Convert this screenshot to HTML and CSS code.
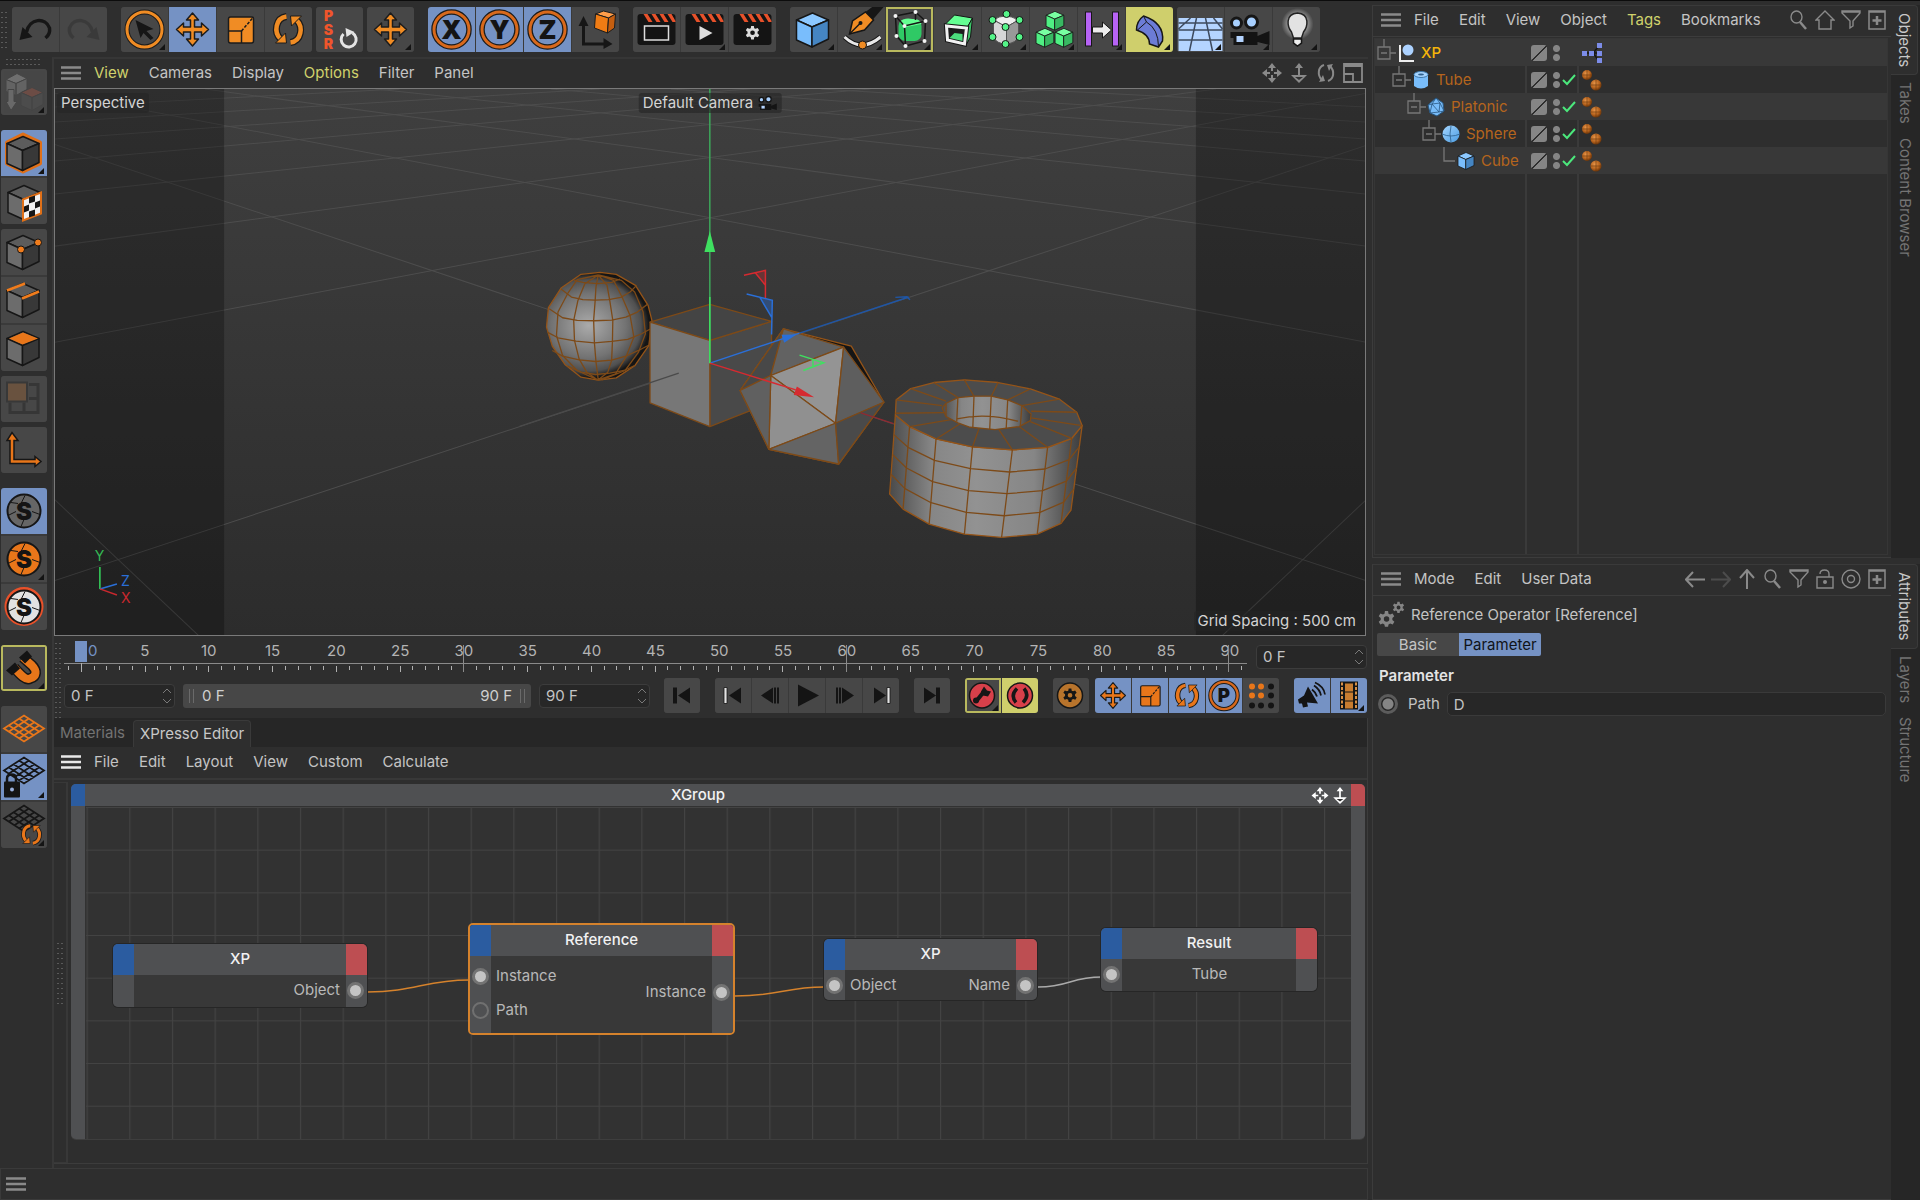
FILE: index.html
```html
<!DOCTYPE html>
<html lang="en">
<head>
    <meta charset="UTF-8">
    <meta name="viewport" content="width=device-width, initial-scale=1.0">
    <title>XPresso Editor</title>
    <link rel="stylesheet" href="styles.css">
</head>
<body>
    <!-- Icon sprite -->
    <svg class="sprite" aria-hidden="true">
        <defs>
            <radialGradient id="ball" cx=".4" cy=".35" r=".7"><stop offset="0" stop-color="#e8964a"/><stop offset=".6" stop-color="#b4611c"/><stop offset="1" stop-color="#5a2c08"/></radialGradient>
            <radialGradient id="glow"><stop offset=".5" stop-color="#bbb" stop-opacity=".8"/><stop offset="1" stop-color="#bbb" stop-opacity="0"/></radialGradient>
            <linearGradient id="blueTop" x1="0" y1="0" x2="1" y2="1"><stop offset="0" stop-color="#a5d6ff"/><stop offset="1" stop-color="#4a9be0"/></linearGradient>
        </defs>

        <symbol id="i-undo" viewBox="0 0 46 45"><path d="M14 25C17 11 33 10 37 21Q38 27 33 31" fill="none" stroke="currentColor" stroke-width="3.5"/><path d="M7 33L10 20L20 30Z" fill="currentColor"/></symbol>
        <symbol id="i-redo" viewBox="0 0 46 45"><path d="M32 25C29 11 13 10 9 21Q8 27 13 31" fill="none" stroke="currentColor" stroke-width="3.5"/><path d="M39 33L36 20L26 30Z" fill="currentColor"/></symbol>
        <symbol id="i-select" viewBox="0 0 46 45"><circle cx="23" cy="22.500" r="17.500" fill="none" stroke="#1c1c1c" stroke-width="5"/><circle cx="23" cy="22.500" r="17.500" fill="none" stroke="#f08c24" stroke-width="3"/><path d="M14 13L32 22L25 24L32 31L29 33L22 26L19 31Z" fill="#161616"/></symbol>
        <symbol id="i-move" viewBox="0 0 46 45"><path d="M23 6L29 13H25V20H32V16L39 22.500L32 29V25H25V32H29L23 39L17 32H21V25H14V29L7 22.500L14 16V20H21V13H17Z" fill="var(--ic, #f08c24)" stroke="#1c1c1c" stroke-width="1.500" stroke-linejoin="round"/></symbol>
        <symbol id="i-scale" viewBox="0 0 46 45"><rect x="11" y="10" width="25" height="26" rx="2" fill="var(--ic, #f08c24)" stroke="#1c1c1c" stroke-width="1.500"/><path d="M11 24H24V36M24 24V24" fill="none" stroke="#1c1c1c" stroke-width="1.500"/><path d="M24 24L36 10" stroke="#1c1c1c" stroke-width="1.500" stroke-dasharray="3 1.500"/></symbol>
        <symbol id="i-rotate" viewBox="0 0 46 45"><g fill="none"><path d="M21 9.500C10 11 8 25 15 32M25 35.500C36 34 38 20 31 13" stroke="#1c1c1c" stroke-width="7"/><path d="M21 9.500C10 11 8 25 15 32M25 35.500C36 34 38 20 31 13" stroke="var(--ic, #f08c24)" stroke-width="4.500"/></g><path d="M10 36L21 36L20 26ZM36 9L25 9L26 19Z" fill="var(--ic, #f08c24)" stroke="#1c1c1c"/></symbol>
        <symbol id="i-reset" viewBox="0 0 46 45"><path d="M27 27A7.500 7.500 0 1 0 36 26" fill="none" stroke="#e4e4e4" stroke-width="3"/><path d="M29 21L38 25L30 30Z" fill="#e4e4e4"/></symbol>
        <symbol id="i-ring" viewBox="0 0 46 45"><circle cx="23" cy="22.500" r="17.500" fill="none" stroke="#1c1c1c" stroke-width="5.500"/><circle cx="23" cy="22.500" r="17.500" fill="none" stroke="#d8691c" stroke-width="3"/></symbol>
        <symbol id="i-coords" viewBox="0 0 46 45"><path d="M11 17V37H33" fill="none" stroke="#161616" stroke-width="3"/><path d="M6 19L11 9L16 19ZM31 31L40 37L31 42Z" fill="#161616"/><g stroke="#1c1c1c" stroke-linejoin="round"><path d="M23 7L31 4L43 7L36 11Z" fill="#ff9e4a"/><path d="M23 7L36 11L35 26L22 21Z" fill="#f07c14"/><path d="M36 11L43 7L42 21L35 26Z" fill="#c45e10"/></g></symbol>
        <symbol id="i-clap" viewBox="0 0 46 45"><rect x="4" y="7" width="38" height="31" rx="3" fill="#141414"/><path d="M10 7H14L19 15H15ZM18 7H22L27 15H23ZM26 7H30L35 15H31ZM34 7H38L42 14V15H39Z" fill="#e8512a"/></symbol>
        <symbol id="i-gear" viewBox="0 0 20 20"><path fill-rule="evenodd" d="M8.500 1h3l.4 2.500 1.500.8 2.300-1 1.700 2.600-1.800 1.600v2l1.900 1.600-1.600 2.600-2.400-.9-1.600.9-.4 2.300h-3l-.5-2.300-1.500-.9-2.400.9-1.500-2.600 1.900-1.600v-2L2.600 5.900l1.600-2.600 2.400 1 1.500-.8zM10 6a2.600 2.600 0 1 0 .1 5.200A2.600 2.600 0 0 0 10 6z" fill="currentColor"/></symbol>
        <symbol id="i-cube" viewBox="0 0 46 45"><g stroke="var(--ln, #161616)" stroke-width="1.500" stroke-linejoin="round"><path d="M6 13L22 6L38 13L21.500 20Z" fill="var(--c1, #5c5c5c)"/><path d="M6 13L21.500 20V40L6 33Z" fill="var(--c2, #6c6c6c)"/><path d="M38 13L21.500 20V40L38 32Z" fill="var(--c3, #383838)"/></g></symbol>
        <symbol id="i-pen" viewBox="0 0 46 45"><path d="M27 5L35 -1H46L34 13Z" fill="#161616"/><path d="M11 27L14 14L27 5L35 13L26 23Z" fill="#f08c24" stroke="#161616" stroke-width="1.500"/><path d="M11 27L22 16" stroke="#161616" stroke-width="1.500"/><circle cx="22" cy="16" r="2" fill="#161616"/><path d="M6 30Q23 46 42 30" fill="none" stroke="#161616" stroke-width="5"/><path d="M6 30Q23 46 42 30" fill="none" stroke="#e8e8e8" stroke-width="3"/><circle cx="24" cy="38" r="4" fill="#f08c24" stroke="#161616"/></symbol>
        <symbol id="i-subdiv" viewBox="0 0 46 45"><rect x="12" y="12" width="23" height="22" rx="7" fill="#2fc965"/><path d="M13 15Q18 10 26 12Q34 12 35 17L20 20Z" fill="#65ff92"/><path d="M9 9L29 5L39 14L18 19ZM9 9L10 29L19 39L18 19M19 39L38 34L39 14M29 5L29 13" fill="none" stroke="#161616" stroke-width="1.500"/><g fill="#f4f4f4"><circle cx="9" cy="9" r="2"/><circle cx="29" cy="5" r="2"/><circle cx="39" cy="14" r="2"/><circle cx="18" cy="19" r="2"/><circle cx="10" cy="29" r="2"/><circle cx="19" cy="39" r="2"/><circle cx="38" cy="34" r="2"/></g></symbol>
        <symbol id="i-extrude" viewBox="0 0 46 45"><g stroke="#161616" stroke-linejoin="round"><path d="M10 18L20 8L38 11L33 20Z" fill="#64ff92"/><path d="M33 20L38 11L36 30L31 39Z" fill="#3bc468"/></g><path d="M12 19L32 21L30 37L13 33Z" fill="#1c1c1c" stroke="#161616" stroke-width="5"/><path d="M12 19L32 21L30 37L13 33Z" fill="#1c1c1c" stroke="#f2f2f2" stroke-width="3"/><path d="M15 31L20 26L28 27L28 34Z" fill="#4bdd7c"/></symbol>
        <symbol id="i-cage" viewBox="0 0 46 45"><g stroke="#555" stroke-linejoin="round"><path d="M11 13Q22 5 36 13L24 20Z" fill="#eee"/><path d="M11 13L24 20V37Q14 37 11 30Z" fill="#d6d6d6"/><path d="M36 13L24 20V37Q34 36 36 29Z" fill="#999"/></g><g fill="#54f588" stroke="#161616"><circle cx="24" cy="7" r="3.500"/><circle cx="10" cy="13" r="3.500"/><circle cx="37" cy="13" r="3.500"/><circle cx="23" cy="20" r="3.500"/><circle cx="10" cy="30" r="3.500"/><circle cx="37" cy="30" r="3.500"/><circle cx="23" cy="37" r="3.500"/></g></symbol>
        <symbol id="i-array" viewBox="0 0 46 45"><g class="green"><use href="#i-cube" x="12" y="1" width="26" height="25"/><use href="#i-cube" x="2" y="18" width="26" height="25"/><use href="#i-cube" x="21" y="18" width="26" height="25"/></g></symbol>
        <symbol id="i-instance" viewBox="0 0 46 45"><g fill="#b763f5" stroke="#161616"><rect x="7" y="5" width="6" height="34"/><rect x="34" y="5" width="6" height="34"/></g><path d="M14 20H24V15L33 23L24 31V26H14Z" fill="#ececec" stroke="#161616"/></symbol>
        <symbol id="i-bend" viewBox="0 0 46 45"><path d="M17 9Q38 16 36 34L32 40L23 37Q23 27 10 23Q10 14 17 9Z" fill="#6c7cd6" stroke="#161616" stroke-width="1.500"/><path d="M17 9L20 15Q32 22 32 40M20 15L11 23" fill="none" stroke="#161616"/></symbol>
        <symbol id="i-floor" viewBox="0 0 46 45"><rect x="1" y="11" width="44" height="33" fill="#b4d4ff"/><path d="M1 16H45M1 23H45M1 33H45M13 11L1 22M19 11L12 44M28 11L35 44M36 11L45 22" fill="none" stroke="#3d4a5e" stroke-width="1.500"/></symbol>
        <symbol id="i-camera" viewBox="0 0 46 45"><circle cx="11" cy="16" r="5" fill="#a8d0ff" stroke="#161616" stroke-width="3"/><circle cx="26" cy="15" r="6" fill="#a8d0ff" stroke="#161616" stroke-width="3"/><path d="M5 25H32V29L44 24V38L32 35V38H8V31H5Z" fill="#141414"/><rect x="11" y="29" width="7" height="6" fill="#b4d4ff"/></symbol>
        <symbol id="i-light" viewBox="0 0 46 45"><circle cx="24" cy="17" r="16" fill="url(#glow)"/><path d="M24 6C11 7 14 20 18 25L20 31H28L30 25C34 20 37 7 24 6Z" fill="#e2e2e2" stroke="#222" stroke-width="1.500"/><path d="M20 32H28V36L24 39L20 36Z" fill="#eee" stroke="#161616" stroke-width="1.500"/></symbol>

        <symbol id="i-convert" viewBox="0 0 46 45"><g stroke="#444"><path d="M5 10L16 4L26 9L15 14Z" fill="#8a8a8a"/><path d="M5 10L15 14V26L5 22ZM26 9L15 14V26L26 20Z" fill="#777"/><path d="M20 23L31 18L42 23L31 28Z" fill="#855045"/><path d="M20 23L31 28V41L20 36ZM42 23L31 28V41L42 35Z" fill="#505050"/><path d="M7 20H13V32H16L10 41L5 32H7Z" fill="#808080"/></g></symbol>
        <symbol id="i-model" viewBox="0 0 46 45"><path d="M6 12L22 4L39 12V33L22 41L6 33Z" fill="none" stroke="#e07018" stroke-width="4" stroke-linejoin="round"/><use href="#i-cube" width="46" height="45"/></symbol>
        <symbol id="i-texture" viewBox="0 0 46 45"><use href="#i-cube" x="1" y="1" width="46" height="45"/><path d="M22 21L40 14V35L22 42Z" fill="#f2f2f2" stroke="#e07018" stroke-width="2"/><path d="M28 19L34 17V23L28 25ZM23 28L28 26V32L23 34ZM34 24L39 22V28L34 30ZM28 33L34 31V37L28 39Z" fill="#161616"/></symbol>
        <symbol id="i-points" viewBox="0 0 46 45"><use href="#i-cube" width="46" height="45"/><g fill="#f07c1c" stroke="#161616"><circle cx="20" cy="20" r="3.500"/><circle cx="37" cy="13" r="3.500"/></g></symbol>
        <symbol id="i-edges" viewBox="0 0 46 45"><use href="#i-cube" width="46" height="45"/><path d="M6 13L24 6M21 21L38 14" stroke="#f07c1c" stroke-width="2.500"/></symbol>
        <symbol id="i-polys" viewBox="0 0 46 45"><use href="#i-cube" width="46" height="45"/><path d="M8 13L22 7L37 13L21.500 19Z" fill="#e8761a"/></symbol>
        <symbol id="i-uv" viewBox="0 0 46 45"><path d="M28 8H37V36H9V26M23 26V36M28 22H37" fill="none" stroke="#363636" stroke-width="3"/><rect x="6" y="6" width="20" height="19" fill="#69523f" stroke="#383838" stroke-width="2"/></symbol>
        <symbol id="i-axis" viewBox="0 0 46 45"><path d="M9 13H6L11 5L17 13H13V32H34V29L40 34L34 39V36H9Z" fill="#e8761a" stroke="#161616" stroke-width="1.500"/></symbol>
        <symbol id="i-snap" viewBox="0 0 46 45"><circle cx="23" cy="22.500" r="16.500" fill="var(--ic, #666)" stroke="#161616" stroke-width="2"/><path d="M7 27L15 23M20 38L23 31M39 26L31 23M24 7L20 15M10 14L17 15" stroke="#161616"/></symbol>
        <symbol id="i-magnet" viewBox="0 0 46 45"><path d="M13 22C20 30 25 35 29 33C36 31 36 25 31 20L22 12" fill="none" stroke="#161616" stroke-width="11"/><path d="M13 22C20 30 25 35 29 33C36 31 36 25 31 20L22 12" fill="none" stroke="#e8761a" stroke-width="8"/><path d="M5 25L14 17L19 23L11 30ZM18 12L26 5L31 11L24 18Z" fill="#141414"/></symbol>
        <symbol id="i-grid" viewBox="0 0 46 45"><path d="M3 22L23 9L43 22L23 35ZM8 19L28 32M13 16L33 29M18 12L38 25M38 19L18 32M33 16L13 29M28 12L8 25" fill="none" stroke="var(--ic, #161616)" stroke-width="1.800"/></symbol>

        <symbol id="i-burger" viewBox="0 0 20 14"><path d="M0 1.500H20M0 7H20M0 12.500H20" stroke="currentColor" stroke-width="2.500"/></symbol>
        <symbol id="i-pan" viewBox="0 0 20 20"><path d="M10 0L14 5H11V8H9V5H6ZM10 20L14 15H11V12H9V15H6ZM0 10L5 6V9H8V11H5V14ZM20 10L15 6V9H12V11H15V14Z" fill="currentColor"/></symbol>
        <symbol id="i-dolly" viewBox="0 0 20 20"><path d="M10 0L14 5H11V12H18L10 20L2 12H9V5H6Z" fill="currentColor"/><path d="M10 17L6 14H14Z" fill="#303030"/></symbol>
        <symbol id="i-orbit" viewBox="0 0 20 20"><path d="M8 2C2 4 1 12 6 17M12 18C18 16 19 8 14 3" fill="none" stroke="currentColor" stroke-width="2"/><path d="M3 19L9 18L7 12ZM17 1L11 2L13 8Z" fill="currentColor"/></symbol>
        <symbol id="i-panel" viewBox="0 0 20 20"><path d="M1 1H19V19H1ZM1 3H19M1 11H10V19" fill="none" stroke="currentColor" stroke-width="1.800"/></symbol>
        <symbol id="i-search" viewBox="0 0 20 20"><ellipse cx="7.500" cy="7" rx="5.500" ry="6" fill="none" stroke="currentColor" stroke-width="1.400"/><path d="M11 12L17 19" stroke="currentColor" stroke-width="2.500"/></symbol>
        <symbol id="i-home" viewBox="0 0 20 20"><path d="M10 1L19 10H16V19H4V10H1Z" fill="none" stroke="currentColor" stroke-width="1.400"/></symbol>
        <symbol id="i-filter" viewBox="0 0 20 20"><path d="M1 1H19V3L12 11V16L9 18V11L1 3ZM1 2H19" fill="none" stroke="currentColor" stroke-width="1.400"/></symbol>
        <symbol id="i-add" viewBox="0 0 20 20"><path d="M2 1H18V19H2ZM2 2H18" fill="none" stroke="currentColor" stroke-width="1.500"/><path d="M10 6V15M5.500 10.500H14.500" stroke="currentColor" stroke-width="2.500"/></symbol>
        <symbol id="i-back" viewBox="0 0 20 20"><path d="M20 10.500H1M8 3L1 10.500L8 18" fill="none" stroke="currentColor" stroke-width="2"/></symbol>
        <symbol id="i-fwd" viewBox="0 0 20 20"><path d="M0 10.500H19M12 3L19 10.500L12 18" fill="none" stroke="currentColor" stroke-width="2"/></symbol>
        <symbol id="i-up" viewBox="0 0 20 20"><path d="M10 20V1M3 9L10 1L17 9" fill="none" stroke="currentColor" stroke-width="2"/></symbol>
        <symbol id="i-lock" viewBox="0 0 20 20"><path d="M2 8H18V19H2ZM5 5Q5 1 9.500 1T14 5V8" fill="none" stroke="currentColor" stroke-width="1.400"/><circle cx="10" cy="13" r="2" fill="currentColor"/></symbol>
        <symbol id="i-target" viewBox="0 0 20 20"><g fill="none" stroke="currentColor" stroke-width="1.400"><circle cx="10" cy="10" r="9"/><circle cx="10" cy="10" r="3.500"/></g></symbol>

        <symbol id="i-minus" viewBox="0 0 19 27"><path d="M7 0V8M1 8H13V20H1ZM4 14H10M13 14H19" fill="none" stroke="#777" stroke-width="1.300"/></symbol>
        <symbol id="i-elbow" viewBox="0 0 19 27"><path d="M7 0V14H18" fill="none" stroke="#777" stroke-width="1.300"/></symbol>
        <symbol id="o-null" viewBox="0 0 18 20"><path d="M3 2V18H17" fill="none" stroke="#eee" stroke-width="2"/><circle cx="11" cy="7" r="5.500" fill="#acd2ff"/></symbol>
        <symbol id="o-tube" viewBox="0 0 18 20"><path d="M2 4V16Q9 21 16 16V4Z" fill="#79bdfa"/><ellipse cx="9" cy="4.500" rx="7" ry="3" fill="#a5d4ff" stroke="#3f79ab"/><ellipse cx="9" cy="4.500" rx="3" ry="1" fill="#30618e"/></symbol>
        <symbol id="o-platonic" viewBox="0 0 18 20"><path d="M9 1L16 6L17 14L10 19L3 16L1 8Z" fill="#79bdfa" stroke="#28567f"/><path d="M5 7L13 6L12 15L5 7L3 16L12 15L17 14L13 6L9 1L5 7L1 8" fill="none" stroke="#28567f" stroke-width=".8"/></symbol>
        <symbol id="o-sphere" viewBox="0 0 18 20"><circle cx="9" cy="10" r="8.500" fill="url(#blueTop)"/><path d="M0 10Q9 14 18 10M9 2Q7 10 9 18" fill="none" stroke="#2b5e8c" stroke-width=".8"/></symbol>
        <symbol id="t-balls" viewBox="0 0 22 24"><circle cx="6" cy="7" r="5" fill="url(#ball)"/><circle cx="15" cy="17" r="5.500" fill="url(#ball)"/><path d="M6 2V12M1 7H11M15 12V22M10 17H20" stroke="#6a350c" stroke-width=".6"/></symbol>
        <symbol id="t-xpresso" viewBox="0 0 22 24"><path d="M3 12H18M12 12L18 5M12 12L18 20" stroke="#161616" stroke-width="1.500"/><g fill="#7c8ce8"><rect x="1" y="10" width="5" height="5"/><rect x="8" y="10" width="5" height="5"/><rect x="16" y="10" width="5" height="5"/><rect x="16" y="2" width="5" height="5"/><rect x="16" y="17" width="5" height="5"/></g></symbol>
    </svg>

    <div class="app">
        <div class="workspace">
            <header class="toolbar">
                <span class="grip"></span>
                <div class="group">
                    <button class="tool" aria-label="Undo"><svg><use href="#i-undo"/></svg></button>
                    <button class="tool faint" aria-label="Redo"><svg><use href="#i-redo"/></svg></button>
                </div>
                <div class="group gap-wide">
                    <button class="tool more" aria-label="Live selection"><svg><use href="#i-select"/></svg></button>
                    <button class="tool on" aria-label="Move"><svg><use href="#i-move"/></svg></button>
                    <button class="tool" aria-label="Scale"><svg><use href="#i-scale"/></svg></button>
                    <button class="tool" aria-label="Rotate"><svg><use href="#i-rotate"/></svg></button>
                </div>
                <div class="group"><button class="tool" aria-label="Reset PSR"><svg viewBox="0 0 46 45"><g class="glyph red"><text x="12" y="14">P</text><text x="12" y="28">S</text><text x="12" y="42">R</text></g><use href="#i-reset"/></svg></button></div>
                <div class="group"><button class="tool more" aria-label="Last tool"><svg><use href="#i-move"/></svg></button></div>
                <div class="group gap-wide">
                    <button class="tool on" aria-label="X axis"><svg viewBox="0 0 46 45"><use href="#i-ring"/><text class="glyph" x="23" y="32" font-size="26">X</text></svg></button>
                    <button class="tool on" aria-label="Y axis"><svg viewBox="0 0 46 45"><use href="#i-ring"/><text class="glyph" x="23" y="32" font-size="26">Y</text></svg></button>
                    <button class="tool on" aria-label="Z axis"><svg viewBox="0 0 46 45"><use href="#i-ring"/><text class="glyph" x="23" y="32" font-size="26">Z</text></svg></button>
                    <button class="tool" aria-label="Coordinate system"><svg><use href="#i-coords"/></svg></button>
                </div>
                <div class="group gap-wide">
                    <button class="tool" aria-label="Render view"><svg viewBox="0 0 46 45"><use href="#i-clap"/><rect x="11" y="19" width="24" height="14" fill="none" stroke="#ddd" stroke-width="1.500"/></svg></button>
                    <button class="tool more" aria-label="Render to picture viewer"><svg viewBox="0 0 46 45"><use href="#i-clap"/><path d="M18 19L31 26L18 33Z" fill="#ddd"/></svg></button>
                    <button class="tool" aria-label="Render settings"><svg viewBox="0 0 46 45"><use href="#i-clap"/><use class="light" href="#i-gear" x="14" y="18" width="18" height="18"/></svg></button>
                </div>
                <div class="group gap-wide">
                    <button class="tool more blue" aria-label="Cube"><svg><use href="#i-cube"/></svg></button>
                    <button class="tool more" aria-label="Spline pen"><svg><use href="#i-pen"/></svg></button>
                    <button class="tool more outlined" aria-label="Subdivision surface"><svg><use href="#i-subdiv"/></svg></button>
                    <button class="tool more" aria-label="Extrude"><svg><use href="#i-extrude"/></svg></button>
                    <button class="tool more" aria-label="Deformation cage"><svg><use href="#i-cage"/></svg></button>
                    <button class="tool more" aria-label="Array"><svg><use href="#i-array"/></svg></button>
                    <button class="tool more" aria-label="Instance"><svg><use href="#i-instance"/></svg></button>
                    <button class="tool more yellow" aria-label="Bend"><svg><use href="#i-bend"/></svg></button>
                </div>
                <div class="group">
                    <button class="tool more" aria-label="Floor"><svg><use href="#i-floor"/></svg></button>
                    <button class="tool more" aria-label="Camera"><svg><use href="#i-camera"/></svg></button>
                    <button class="tool more" aria-label="Light"><svg><use href="#i-light"/></svg></button>
                </div>
            </header>

            <div class="body">
                <aside class="side">
                    <span class="grip flat"></span>
                    <div class="group"><button class="tool more faint" aria-label="Make editable"><svg><use href="#i-convert"/></svg></button></div>
                    <div class="group apart">
                        <button class="tool more on" aria-label="Model mode"><svg><use href="#i-model"/></svg></button>
                        <button class="tool" aria-label="Texture mode"><svg><use href="#i-texture"/></svg></button>
                    </div>
                    <div class="group">
                        <button class="tool" aria-label="Points"><svg><use href="#i-points"/></svg></button>
                        <button class="tool" aria-label="Edges"><svg><use href="#i-edges"/></svg></button>
                        <button class="tool" aria-label="Polygons"><svg><use href="#i-polys"/></svg></button>
                    </div>
                    <div class="group"><button class="tool" aria-label="UV mode"><svg><use href="#i-uv"/></svg></button></div>
                    <div class="group"><button class="tool" aria-label="Enable axis"><svg><use href="#i-axis"/></svg></button></div>
                    <div class="group apart">
                        <button class="tool on" aria-label="Viewport solo off"><svg viewBox="0 0 46 45"><use href="#i-snap"/><text class="glyph" x="23" y="31" font-size="24">S</text></svg></button>
                        <button class="tool more orange" aria-label="Viewport solo single"><svg viewBox="0 0 46 45"><use href="#i-snap"/><text class="glyph" x="23" y="31" font-size="24">S</text></svg></button>
                        <button class="tool white" aria-label="Viewport solo selection"><svg viewBox="0 0 46 45"><circle cx="23" cy="22" r="18" fill="none" stroke="#e8512a" stroke-width="3"/><use href="#i-snap"/><text class="glyph" x="23" y="31" font-size="24">S</text></svg></button>
                    </div>
                    <div class="group apart"><button class="tool more outlined" aria-label="Enable snap"><svg><use href="#i-magnet"/></svg></button></div>
                    <div class="group apart">
                        <button class="tool orange" aria-label="Workplane"><svg><use href="#i-grid"/></svg></button>
                        <button class="tool more on" aria-label="Locked workplane"><svg viewBox="0 0 46 45"><use href="#i-grid" y="-6" width="46" height="45"/><path d="M6 28V24Q6 20 10.500 20T15 24V28" fill="none" stroke="#141414" stroke-width="2.500"/><rect x="3" y="27" width="16" height="16" rx="1" fill="#141414"/><circle cx="11" cy="35" r="2" fill="#9ab0dc"/></svg></button>
                        <button class="tool more" aria-label="Planar workplane"><svg viewBox="0 0 46 45"><use href="#i-grid" y="-6" width="46" height="45"/><g class="orange"><use href="#i-rotate" x="15" y="17" width="31" height="30"/></g></svg></button>
                    </div>
                </aside>

                <main class="main">
                    <nav class="menubar">
                        <svg class="burger"><use href="#i-burger"/></svg>
                        <button class="hot">View</button>
                        <button>Cameras</button>
                        <button>Display</button>
                        <button class="hot">Options</button>
                        <button>Filter</button>
                        <button>Panel</button>
                        <div class="tools">
                            <svg><use href="#i-pan"/></svg>
                            <svg><use href="#i-dolly"/></svg>
                            <svg><use href="#i-orbit"/></svg>
                            <svg><use href="#i-panel"/></svg>
                        </div>
                    </nav>

                    <section class="viewport">
                        <svg class="scene" viewBox="54 89 1312 545" preserveAspectRatio="xMidYMid slice">
                            <defs>
                                <linearGradient id="bg" x1="0" y1="0" x2="0" y2="1"><stop offset="0" stop-color="#3f3f3f"/><stop offset="1" stop-color="#2c2c2c"/></linearGradient>
                                <radialGradient id="sph" gradientUnits="userSpaceOnUse" cx="180" cy="315" r="175"><stop offset="0" stop-color="#ababab"/><stop offset=".55" stop-color="#737373"/><stop offset=".78" stop-color="#505050"/><stop offset=".9" stop-color="#151515"/></radialGradient>
                                <linearGradient id="wall" x1="0" y1="0" x2="1" y2="0"><stop offset="0" stop-color="#4a4a4a"/><stop offset=".22" stop-color="#868686"/><stop offset=".45" stop-color="#929292"/><stop offset=".75" stop-color="#868686"/><stop offset="1" stop-color="#3c3c3c"/></linearGradient>
                            </defs>
                            <rect x="54" y="89" width="1312" height="545" fill="url(#bg)"/>
                            <!-- floor grid, right half mirrors the left -->
                            <g stroke="#4d4d4d" stroke-width="1" fill="none">
                                <path id="floor" d="M55 580L710 363M55 342L1366 93M55 246L1215 89M55 194L1045 89M55 161L870 89M55 139L750 89M55 122L600 89M55 107L400 89M55 498L200 635"/>
                                <use href="#floor" transform="translate(1421 0) scale(-1 1)"/>
                                <path d="M55 144L710 363M710 363L1366 145"/>
                            </g>
                            <path d="M54 89H225V634H54ZM1195 89H1366V634H1195Z" fill="#000" fill-opacity=".27"/>

                            <g transform="translate(520 220) scale(.3827 .3333)" stroke-linejoin="round" stroke="#7d4a18" class="wire">
                                <path d="M160 162L210 156L252 162L302 195L335 255L345 300L337 375L300 436L252 472L205 479L160 470L118 432L85 377L70 320L75 262L108 203Z" fill="url(#sph)" stroke="#955418"/>
                                <g fill="none">
                                    <path d="M142 180L165 186L203 190L240 186L262 176M108 206L135 230L165 238L197 239L232 238L264 231L288 215L305 195M77 265L112 292L150 300L195 301L240 299L277 290L307 275L333 252M72 335L100 352L147 362L195 367L240 363L282 357L318 340L342 325M85 390L112 407L155 418L198 423L240 419L275 408L310 390L335 375M125 437L160 455L198 462L235 458L272 450L300 435"/>
                                    <path d="M205 164L150 178L125 220L100 275L96 345L112 405L150 450L203 478M205 164L170 190L152 240L141 300L143 360L155 415L175 455L203 478M205 164L199 200L197 240L193 300L195 367L199 423L205 478M205 164L228 195L235 240L243 300L242 363L240 419L230 455L205 478M205 164L245 180L268 232L288 285L298 350L277 410L250 460L205 478M205 164L265 180L300 215L322 275L328 340L310 395L275 450L215 478"/>
                                </g>

                                <path d="M496 360L657 303V545L496 618Z" fill="#494949"/>
                                <path d="M340 305L496 252L657 303L496 360Z" fill="#444"/>
                                <path d="M340 305L496 360V618L340 547Z" fill="#777"/>
                                <path d="M0 617L415 458" stroke="#4a4a4a" fill="none"/>

                                <path d="M688 325L865 377L950 545L832 730L650 686L575 510Z" fill="#151515" stroke="#955418"/>
                                <path d="M688 325L655 465L575 510Z" fill="#484848"/>
                                <path d="M688 325L845 380L655 465Z" fill="#626262"/>
                                <path d="M655 465L845 380L824 608Z" fill="#949494"/>
                                <path d="M655 465L824 608L650 686Z" fill="#909090"/>
                                <path d="M575 510L655 465L650 686Z" fill="#606060"/>
                                <path d="M845 380L950 545L824 608Z" fill="#5e5e5e"/>
                                <path d="M650 686L824 608L832 730Z" fill="#646464"/>
                                <path d="M824 608L950 545L832 730Z" fill="#4a4a4a"/>

                                <path d="M980 583L1017 618L1086 655L1181 679L1285 688L1377 680L1440 653L1467 615L1438 868L1412 908L1350 940L1257 950L1160 940L1068 910L1000 865L965 820Z" fill="url(#wall)" stroke="#955418"/>
                                <path d="M982 538L1020 504L1080 486L1160 478L1248 486L1332 505L1408 536L1453 575L1467 615L1440 653L1377 680L1285 688L1181 679L1086 655L1017 618L980 583Z" fill="#4c4c4c" stroke="#955418"/>
                                <path d="M1102 562L1112 548L1143 531L1185 527L1230 527L1273 538L1310 555L1334 580L1332 600L1303 618L1240 627L1175 620L1143 607L1112 588Z" fill="url(#wall)"/>
                                <g fill="none">
                                    <path d="M976 642L1013 680L1082 719L1176 744L1278 754L1370 745L1433 717L1460 678M973 702L1009 742L1077 783L1171 810L1271 819L1364 810L1426 781L1453 742M969 761L1004 803L1073 846L1165 875L1264 885L1357 875L1419 844L1445 805"/>
                                    <path d="M1017 618L1000 865M1086 655L1068 910M1181 679L1160 940M1285 688L1257 950M1377 680L1350 940M1440 653L1412 908"/>
                                    <path d="M982 538L1102 555M1020 504L1112 542M1080 486L1143 531M1160 478L1185 527M1248 486L1230 527M1332 505L1273 538M1408 536L1310 555M1453 575L1334 572M1467 615L1334 592M1440 653L1332 603M1377 680L1303 618M1285 688L1250 627M1181 679L1198 624M1086 655L1148 610M1017 618L1125 597M980 578L1108 576"/>
                                    <path d="M1112 548V588M1143 531L1140 603M1185 527L1182 620M1230 527L1226 627M1273 538L1269 624M1310 555L1306 615M1140 595Q1215 575 1300 602"/>
                                </g>
                            </g>

                            <g transform="translate(520 220) scale(.3827 .3333)" fill="none" class="gizmo">
                                <path d="M496 428L730 338" stroke="#2a6fd8"/>
                                <path d="M730 338L1015 230M980 231L1010 229L1018 238" stroke="#1f56a6"/>
                                <path d="M890 577L975 609" stroke="#8f2a32"/>
                                <path d="M496 428V-393" stroke="#3da85a"/>
                                <path d="M496 428V230" stroke="#3fe060"/>
                                <path d="M496 428L720 508" stroke="#d62a30"/>
                                <path d="M585 165L641 150V236M615 158L640 193" stroke="#d62a30"/>
                                <path d="M592 221L659 240L657 342M627 232L657 290" stroke="#2a6fd8"/>
                                <path d="M730 404L793 427L740 450M765 416V440" stroke="#3fe060"/>
                                <path d="M615 158L641 150V193Z" fill="#d62a30" fill-opacity=".3"/>
                                <path d="M627 232L659 240L657 290Z" fill="#2a6fd8" fill-opacity=".4"/>
                                <path d="M482 95L496 32L510 95Z" fill="#3fe060"/>
                                <path d="M683 343L722 342L690 367Z" fill="#2a6fd8"/>
                                <path d="M723 498L768 530L715 523Z" fill="#d62a30"/>
                            </g>

                            <g fill="none" stroke-width="1.500">
                                <path d="M101 588V566" stroke="#35d65c"/>
                                <path d="M101 588L118 583" stroke="#2a6fd8"/>
                                <path d="M101 588L118 594" stroke="#c8282e"/>
                            </g>
                            <g class="axis-names">
                                <text x="96" y="560" fill="#35b854">Y</text>
                                <text x="122" y="585" fill="#2a6fd8">Z</text>
                                <text x="122" y="602" fill="#c8282e">X</text>
                            </g>
                        </svg>
                        <span class="tag tag-view">Perspective</span>
                        <span class="tag tag-camera">Default Camera <svg viewBox="3 6 43 34"><use href="#i-camera" width="46" height="45"/></svg></span>
                        <span class="tag tag-grid">Grid Spacing : 500 cm</span>
                    </section>

                    <div class="timeline">
                        <span class="grip"></span>
                        <div class="ruler">
                            <div class="labels" id="labels"></div>
                            <div class="ticks" id="ticks"></div>
                            <span class="playhead"></span>
                        </div>
                        <div class="field"><input type="text" value="0 F" aria-label="Current frame"><svg viewBox="0 0 10 16"><path d="M1 5L5 1L9 5M1 11L5 15L9 11"/></svg></div>
                    </div>

                    <div class="transport">
                        <span class="grip"></span>
                        <div class="field"><input type="text" value="0 F" aria-label="Start frame"><svg viewBox="0 0 10 16"><path d="M1 5L5 1L9 5M1 11L5 15L9 11"/></svg></div>
                        <div class="range"><i></i><span>0 F</span><span>90 F</span><i></i></div>
                        <div class="field"><input type="text" value="90 F" aria-label="End frame"><svg viewBox="0 0 10 16"><path d="M1 5L5 1L9 5M1 11L5 15L9 11"/></svg></div>
                        <div class="keys">
                            <div class="group small"><button class="tool" aria-label="Go to start"><svg viewBox="0 0 36 34"><path d="M9 9H13V25H9ZM26 9V25L14 17Z" fill="#141414"/></svg></button></div>
                            <div class="group small">
                                <button class="tool" aria-label="Previous key"><svg viewBox="0 0 36 34"><path d="M26 9V25L14 17Z" fill="#141414"/><path d="M9 9H12V25H9Z" fill="#e4e4e4" stroke="#141414" stroke-width=".8"/></svg></button>
                                <button class="tool" aria-label="Previous frame"><svg viewBox="0 0 36 34"><path d="M21 9V25L9 17ZM22 9H24V25H22ZM25 9H27V25H25Z" fill="#141414"/></svg></button>
                                <button class="tool" aria-label="Play"><svg viewBox="0 0 36 34"><path d="M9 6L30 17L9 28Z" fill="#141414"/></svg></button>
                                <button class="tool" aria-label="Next frame"><svg viewBox="0 0 36 34"><path d="M16 9V25L28 17ZM10 9H12V25H10ZM13 9H15V25H13Z" fill="#141414"/></svg></button>
                                <button class="tool" aria-label="Next key"><svg viewBox="0 0 36 34"><path d="M11 9V25L23 17Z" fill="#141414"/><path d="M24 9H27V25H24Z" fill="#e4e4e4" stroke="#141414" stroke-width=".8"/></svg></button>
                            </div>
                            <div class="group small"><button class="tool" aria-label="Go to end"><svg viewBox="0 0 36 34"><path d="M10 9V25L22 17ZM22 9H26V25H22Z" fill="#141414"/></svg></button></div>
                            <div class="group small">
                                <button class="tool more outlined" aria-label="Record key"><svg viewBox="0 0 36 34"><circle cx="17" cy="17" r="12.500" fill="#d8404a" stroke="#161616" stroke-width="1.500"/><path d="M11 23L19 13" stroke="#161616" stroke-width="4"/><path d="M19 8L22 12L26 13L23 18L18 17L16 13Z" fill="#161616"/><circle cx="11" cy="22" r="3" fill="#161616"/></svg></button>
                                <button class="tool yellow" aria-label="Autokey"><svg viewBox="0 0 36 34"><circle cx="18" cy="17" r="12.500" fill="#d8404a" stroke="#161616" stroke-width="1.500"/><path d="M15 10Q8 17 14 24M21 24Q28 17 22 10" fill="none" stroke="#161616" stroke-width="3.500"/></svg></button>
                            </div>
                            <div class="group small"><button class="tool" aria-label="Keyframe selection"><svg viewBox="0 0 36 34"><circle cx="17" cy="17" r="12.500" fill="#b8742c" stroke="#161616" stroke-width="1.500"/><use class="dark" href="#i-gear" x="8" y="9" width="18" height="18"/></svg></button></div>
                            <div class="group small tight orange">
                                <button class="tool on" aria-label="Key position"><svg><use href="#i-move"/></svg></button>
                                <button class="tool on" aria-label="Key scale"><svg><use href="#i-scale"/></svg></button>
                                <button class="tool on" aria-label="Key rotation"><svg><use href="#i-rotate"/></svg></button>
                                <button class="tool on" aria-label="Key parameter"><svg viewBox="0 0 46 45"><use href="#i-ring"/><text class="glyph" x="23" y="31" font-size="24">P</text></svg></button>
                                <button class="tool" aria-label="Key point level"><svg viewBox="0 0 36 34"><g fill="#e8761a"><circle cx="9" cy="8" r="3"/><circle cx="18" cy="8" r="3"/><circle cx="9" cy="17" r="3"/><circle cx="18" cy="17" r="3"/></g><g fill="#141414"><circle cx="28" cy="8" r="3"/><circle cx="28" cy="17" r="3"/><circle cx="9" cy="27" r="3"/><circle cx="18" cy="27" r="3"/><circle cx="28" cy="27" r="3"/></g></svg></button>
                            </div>
                            <div class="group small">
                                <button class="tool on" aria-label="Sound"><svg viewBox="0 0 36 34"><path d="M4 21L10 17L14 8L24 25L13 24L14 28L9 29L8 25H5Z" fill="#141414"/><path d="M18 11Q22 14 23 18M20 7Q26 11 27 17M21 4Q30 8 31 16" fill="none" stroke="#141414" stroke-width="1.800"/></svg></button>
                                <button class="tool on more" aria-label="Playback rate"><svg viewBox="0 0 36 34"><path d="M9 3H27V31H9Z" fill="#141414"/><path d="M14 5H22V13H14ZM14 14H22V22H14ZM14 23H22V30H14Z" fill="#c87c30"/><path d="M11 4V30M25 4V30" stroke="#d89048" stroke-width="2" stroke-dasharray="3 1.500"/></svg></button>
                            </div>
                        </div>
                    </div>

                    <section class="xpresso">
                        <div class="tabs">
                            <button class="tab">Materials</button>
                            <button class="tab active">XPresso Editor</button>
                        </div>
                        <nav class="menubar">
                            <svg class="burger bright"><use href="#i-burger"/></svg>
                            <button>File</button>
                            <button>Edit</button>
                            <button>Layout</button>
                            <button>View</button>
                            <button>Custom</button>
                            <button>Calculate</button>
                        </nav>
                        <div class="editor">
                            <div class="strip"><span class="grip"></span></div>
                            <div class="xgroup">
                                <div class="xgroup-head">
                                    <span class="in"></span>
                                    <h2>XGroup</h2>
                                    <svg><use href="#i-pan"/></svg>
                                    <svg><use href="#i-dolly"/></svg>
                                    <span class="out"></span>
                                </div>
                                <div class="canvas">
                                    <svg class="wires">
                                        <defs><pattern id="cells" x="1.600" y="1" width="42.670" height="42.670" patternUnits="userSpaceOnUse"><path d="M0 .5H43M.5 0V43" stroke="#434343" stroke-width="1.200"/></pattern></defs>
                                        <rect x="1" y="1" width="100%" height="100%" fill="url(#cells)"/>
                                        <g fill="none" stroke="#d5822c" stroke-width="1.500">
                                            <path d="M282 186C330 186 340 174 384 174"/>
                                            <path d="M650 190C695 190 700 181 739 181"/>
                                            <path d="M953 181C985 181 985 171 1017 171" stroke="#aaa"/>
                                        </g>
                                    </svg>

                                    <article class="node n-source">
                                        <h3>XP</h3>
                                        <div class="ports">
                                            <ul></ul>
                                            <ul class="right"><li>Object<b></b></li></ul>
                                        </div>
                                    </article>
                                    <article class="node n-reference selected">
                                        <h3>Reference</h3>
                                        <div class="ports">
                                            <ul><li><b></b>Instance</li><li><b class="open"></b>Path</li></ul>
                                            <ul class="right"><li>Instance<b></b></li></ul>
                                        </div>
                                    </article>
                                    <article class="node n-name">
                                        <h3>XP</h3>
                                        <div class="ports">
                                            <ul><li><b></b>Object</li></ul>
                                            <ul class="right"><li>Name<b></b></li></ul>
                                        </div>
                                    </article>
                                    <article class="node n-result">
                                        <h3>Result</h3>
                                        <div class="ports">
                                            <ul><li><b></b></li></ul>
                                            <span class="value">Tube</span>
                                            <ul></ul>
                                        </div>
                                    </article>
                                </div>
                            </div>
                        </div>
                    </section>
                </main>
            </div>

            <footer class="status"><svg class="burger"><use href="#i-burger"/></svg></footer>
        </div>

        <div class="managers">
            <section class="manager objects">
                <div class="pane">
                    <nav class="menubar">
                        <svg class="burger"><use href="#i-burger"/></svg>
                        <button>File</button>
                        <button>Edit</button>
                        <button>View</button>
                        <button>Object</button>
                        <button class="hot">Tags</button>
                        <button>Bookmarks</button>
                        <div class="tools">
                            <svg><use href="#i-search"/></svg>
                            <svg><use href="#i-home"/></svg>
                            <svg><use href="#i-filter"/></svg>
                            <svg><use href="#i-add"/></svg>
                        </div>
                    </nav>
                    <div class="tree">
                        <table>
                            <tr>
                                <td class="name l0 current"><div><svg class="toggle"><use href="#i-minus"/></svg><svg><use href="#o-null"/></svg>XP</div></td>
                                <td class="flags"><div><i class="layer"></i><i class="dots"></i></div></td>
                                <td class="tags"><svg><use href="#t-xpresso"/></svg></td>
                            </tr>
                            <tr>
                                <td class="name l1"><div><svg class="toggle"><use href="#i-minus"/></svg><svg><use href="#o-tube"/></svg>Tube</div></td>
                                <td class="flags"><div><i class="layer"></i><i class="dots"></i><svg viewBox="0 0 14 12"><path d="M1 6L5 10L13 1"/></svg></div></td>
                                <td class="tags"><svg><use href="#t-balls"/></svg></td>
                            </tr>
                            <tr>
                                <td class="name l2"><div><svg class="toggle"><use href="#i-minus"/></svg><svg><use href="#o-platonic"/></svg>Platonic</div></td>
                                <td class="flags"><div><i class="layer"></i><i class="dots"></i><svg viewBox="0 0 14 12"><path d="M1 6L5 10L13 1"/></svg></div></td>
                                <td class="tags"><svg><use href="#t-balls"/></svg></td>
                            </tr>
                            <tr>
                                <td class="name l3"><div><svg class="toggle"><use href="#i-minus"/></svg><svg><use href="#o-sphere"/></svg>Sphere</div></td>
                                <td class="flags"><div><i class="layer"></i><i class="dots"></i><svg viewBox="0 0 14 12"><path d="M1 6L5 10L13 1"/></svg></div></td>
                                <td class="tags"><svg><use href="#t-balls"/></svg></td>
                            </tr>
                            <tr>
                                <td class="name l4"><div><svg class="toggle"><use href="#i-elbow"/></svg><svg class="blue" viewBox="4 3 36 40"><use href="#i-cube" width="46" height="45"/></svg>Cube</div></td>
                                <td class="flags"><div><i class="layer"></i><i class="dots"></i><svg viewBox="0 0 14 12"><path d="M1 6L5 10L13 1"/></svg></div></td>
                                <td class="tags"><svg><use href="#t-balls"/></svg></td>
                            </tr>
                        </table>
                    </div>
                </div>
                <div class="vtabs">
                    <button class="active">Objects</button>
                    <button>Takes</button>
                    <button>Content Browser</button>
                </div>
            </section>

            <section class="manager attributes">
                <div class="pane">
                    <nav class="menubar">
                        <svg class="burger"><use href="#i-burger"/></svg>
                        <button>Mode</button>
                        <button>Edit</button>
                        <button>User Data</button>
                        <div class="tools">
                            <svg><use href="#i-back"/></svg>
                            <svg class="off"><use href="#i-fwd"/></svg>
                            <svg><use href="#i-up"/></svg>
                            <svg><use href="#i-search"/></svg>
                            <svg><use href="#i-filter"/></svg>
                            <svg><use href="#i-lock"/></svg>
                            <svg><use href="#i-target"/></svg>
                            <svg><use href="#i-add"/></svg>
                        </div>
                    </nav>
                    <div class="attr">
                        <div class="attr-title"><svg viewBox="0 0 28 28"><use href="#i-gear" x="-1" y="9" width="21" height="21"/><use href="#i-gear" x="14" y="0" width="15" height="15"/></svg>Reference Operator [Reference]</div>
                        <div class="segments"><button>Basic</button><button class="active">Parameter</button></div>
                        <h2>Parameter</h2>
                        <div class="row">
                            <input type="radio" id="key" checked aria-label="Path keyframe">
                            <label for="path">Path</label>
                            <input type="text" id="path" value="D">
                        </div>
                    </div>
                </div>
                <div class="vtabs">
                    <button class="active">Attributes</button>
                    <button>Layers</button>
                    <button>Structure</button>
                </div>
            </section>
        </div>
    </div>

    <script>
        const labels = document.getElementById('labels');
        const ticks = document.getElementById('ticks');

        for (let frame = 0; frame <= 90; frame += 5) {
            const label = document.createElement('span');
            label.textContent = frame;
            labels.appendChild(label);
        }

        for (let frame = -1; frame <= 91; frame++) {
            const tick = document.createElement('i');
            if (frame % 30 === 0) tick.className = frame === 0 ? 'start' : 'major';
            else if (frame % 5 === 0) tick.className = 'mid';
            ticks.appendChild(tick);
        }
    </script>
</body>
</html>
```
FILE: styles.css
```css
* {
    box-sizing: border-box;
}
body {
    margin: 0;
    background: #2e2e2e;
    color: #c4c4c4;
    font-family: Inter, "Liberation Sans", sans-serif;
    font-size: 15px;
    line-height: 20px;
}
button,
input {
    font: inherit;
    color: inherit;
    background: none;
    border: 0;
    padding: 0;
    margin: 0;
}
svg {
    display: block;
}
h2,
h3,
ul {
    margin: 0;
    padding: 0;
    font-size: 15px;
    list-style: none;
}
.sprite {
    position: absolute;
    width: 0;
    height: 0;
}
.glyph {
    font-family: Inter, sans-serif;
    font-weight: 900;
    text-anchor: middle;
    fill: #141414;
}
.glyph.red {
    font-size: 14px;
    fill: #f0552c;
}

/* Layout */
.app {
    display: grid;
    grid-template-columns: minmax(0, 1fr) 548px;
    gap: 4px;
    min-height: 100vh;
    border-top: 1px solid #0c0c0c;
}
.workspace {
    display: flex;
    flex-direction: column;
    min-width: 0;
}
.body {
    flex: 1;
    display: flex;
}
.main {
    flex: 1;
    min-width: 0;
    display: flex;
    flex-direction: column;
    border-left: 2px solid #383838;
    border-top: 2px solid #363636;
}

/* Tool buttons */
.toolbar {
    display: flex;
    gap: 4px;
    height: 56px;
    padding-top: 6px;
}
.group {
    display: flex;
    gap: 1px;
    height: 45px;
    background: #3a3a3a;
    border-radius: 3px;
    overflow: hidden;
}
.gap-wide {
    margin-left: 10px;
}
.tool {
    position: relative;
    width: 47px;
    height: 45px;
    background: #474747;
    color: #161616;
    cursor: pointer;
}
.tool svg {
    width: 100%;
    height: 100%;
}
.tool.on {
    background: #7592c4;
}
.tool.yellow {
    background: #cfcf6c;
}
.tool.outlined {
    box-shadow: inset 0 0 0 2px #b9b95e;
}
.tool.more::after {
    content: "";
    position: absolute;
    right: 3px;
    bottom: 2px;
    border-left: 6px solid transparent;
    border-bottom: 6px solid #141414;
}
.faint svg {
    opacity: 0.6;
}
.toolbar .faint svg {
    opacity: 0.25;
}
.light {
    color: #ddd;
}
.dark {
    color: #161616;
}
.orange {
    --ic: #e8761a;
}
.white {
    --ic: #e2e2e2;
}
.blue {
    --c1: #8cc8ff;
    --c2: #79bdfc;
    --c3: #4585c2;
}
.green {
    --c1: #78ffa2;
    --c2: #4ff083;
    --c3: #38b862;
}
.grip {
    width: 8px;
    height: 38px;
    margin-top: 3px;
    background: radial-gradient(circle, #5a5a5a 1px, transparent 1px) 0 0 / 4px 5px;
}
.side {
    display: flex;
    flex-direction: column;
    gap: 5px;
    width: 52px;
    padding-left: 1px;
}
.side .group {
    flex-direction: column;
    width: 46px;
    height: auto;
    gap: 2px;
}
.side .tool {
    width: 46px;
    height: 46px;
}
.side .apart {
    margin-top: 10px;
}
.grip.flat {
    width: 36px;
    height: 8px;
    margin: 0 0 -1px 4px;
}

/* Menu bars */
.menubar {
    display: flex;
    align-items: center;
    gap: 20px;
    height: 29px;
    padding: 0 5px 2px 7px;
    white-space: nowrap;
}
.burger {
    width: 20px;
    height: 14px;
    margin-right: -7px;
    color: #8a8a8a;
}
.burger.bright {
    color: #e8e8e8;
}
.hot {
    color: #d0d26c;
}
.tools {
    display: flex;
    gap: 6px;
    margin-left: auto;
    color: #8a8a8a;
}
.tools svg {
    width: 20px;
    height: 20px;
}
.main > .menubar .tools {
    gap: 7px;
}
.tools .off {
    color: #4c4c4c;
}

/* Viewport */
.viewport {
    position: relative;
    flex: 1;
    min-height: 300px;
    margin-right: 2px;
    border: 1px solid #7a7a7a;
}
.scene {
    position: absolute;
    inset: 0;
    width: 100%;
    height: 100%;
}
.wire path,
.gizmo path {
    vector-effect: non-scaling-stroke;
}
.wire {
    stroke-width: 1.3px;
}
.gizmo {
    stroke-width: 1.5px;
}
.axis-names {
    font-size: 14px;
}
.tag {
    position: absolute;
    display: flex;
    gap: 4px;
    padding: 0 4px;
    border-radius: 3px;
    background: rgba(36, 36, 36, 0.6);
    color: #d4d4d4;
    white-space: nowrap;
}
.tag-view {
    left: 2px;
    top: 4px;
}
.tag-camera {
    left: 50%;
    top: 4px;
    transform: translateX(-50%);
}
.tag-camera svg {
    width: 20px;
    height: 20px;
}
.tag-grid {
    right: 5px;
    bottom: 4px;
}

/* Timeline */
.timeline {
    display: flex;
    height: 41px;
    padding-top: 2px;
    margin-right: 1px;
}
.ruler {
    position: relative;
    flex: 1;
    margin: 3px 9px 0 2px;
}
.labels {
    display: flex;
    justify-content: space-between;
    height: 22px;
    margin: 0 17px;
}
.labels span {
    display: flex;
    justify-content: center;
    width: 0;
    color: #b4b4b4;
}
.labels span:first-child {
    justify-content: flex-start;
    text-indent: 7px;
    color: #7592c4;
}
.ticks {
    display: flex;
    justify-content: space-between;
    padding: 2px 4px 0;
    border-top: 1px solid #8a8a8a;
    height: 12px;
}
.ticks i {
    width: 1px;
    height: 4px;
    background: #b0b0b0;
}
.ticks .mid {
    height: 6px;
}
.ticks .start {
    height: 9px;
    margin-top: -3px;
}
.ticks .major {
    height: 27px;
    margin-top: -21px;
    background: #8a8a8a;
}
.playhead {
    position: absolute;
    left: 11px;
    top: 0;
    width: 12px;
    height: 21px;
    background: #7592c4;
}
.field {
    display: flex;
    align-items: center;
    width: 111px;
    height: 24px;
    padding: 0 2px 0 6px;
    background: #272727;
    border: 1px solid #3c3c3c;
    border-radius: 4px;
}
.timeline .field {
    margin-top: 7px;
}
.field input {
    flex: 1;
    min-width: 0;
}
.field svg {
    width: 10px;
    height: 16px;
    fill: none;
    stroke: #7a7a7a;
}
.transport {
    display: flex;
    gap: 8px;
    height: 41px;
    align-items: flex-start;
}
.transport > .field,
.transport > .range {
    margin-top: 7px;
}
.transport > .grip {
    margin-right: -6px;
}
.range {
    flex: 1;
    display: flex;
    align-items: center;
    gap: 8px;
    min-width: 120px;
    height: 24px;
    padding: 0 6px;
    border-radius: 3px;
    background: #474747;
    color: #d0d0d0;
}
.range span:last-of-type {
    margin-left: auto;
}
.range i {
    width: 5px;
    height: 14px;
    border: solid #6a6a6a;
    border-width: 0 1px;
}
.keys {
    display: flex;
    margin: 1px 1px 0 6px;
    gap: 15px;
}
.small {
    height: 35px;
}
.small .tool {
    width: 36px;
    height: 35px;
}
.tight {
    margin-left: -9px;
}

/* XPresso editor */
.xpresso {
    display: flex;
    flex-direction: column;
    height: 446px;
    margin-bottom: 4px;
    border-right: 1px solid #3c3c3c;
    border-bottom: 1px solid #3c3c3c;
}
.xpresso .menubar {
    height: 31px;
}
.tabs {
    display: flex;
    height: 29px;
    background: #262626;
}
.tab {
    padding: 0 6px;
    color: #737373;
}
.tab.active {
    margin: 2px 0 0 2px;
    background: #2e2e2e;
    border: 1px solid #3a3a3a;
    border-bottom: 0;
    border-radius: 4px 4px 0 0;
    color: #c8c8c8;
}
.editor {
    flex: 1;
    display: flex;
    border-top: 2px solid #383838;
}
.strip {
    display: flex;
    align-items: center;
    justify-content: center;
    width: 14px;
    margin-top: 2px;
    border: solid #383838;
    border-width: 1px 2px 1px 0;
}
.strip .grip {
    height: 66px;
}
.xgroup {
    flex: 1;
    display: flex;
    flex-direction: column;
    margin: 4px 2px 24px 3px;
    border: solid #4f5052;
    border-width: 0 14px;
    border-radius: 5px;
    background: #323232;
    box-shadow: 0 1px 0 #3e3e3e;
}
.xgroup-head {
    display: flex;
    align-items: center;
    gap: 2px;
    height: 22px;
    margin: 0 -14px;
    background: #4f5052;
    border-radius: 5px 5px 0 0;
    overflow: hidden;
    color: #fff;
}
.xgroup-head h2 {
    flex: 1;
    text-align: center;
}
.xgroup-head h2,
.node h3 {
    color: #f2f2f2;
    font-weight: 500;
}
.xgroup-head svg {
    width: 18px;
    height: 17px;
}
.xgroup-head span {
    width: 14px;
    height: 22px;
}
.in {
    background: #2b5ca0;
}
.out {
    background: #bd4e52;
}
.canvas {
    position: relative;
    flex: 1;
    overflow: hidden;
}
.wires {
    position: absolute;
    width: 100%;
    height: 100%;
}
/* Nodes sit on the free canvas */
.node {
    position: absolute;
    display: flex;
    flex-direction: column;
    border-radius: 5px;
    overflow: hidden;
    background: #383838;
    box-shadow: 0 0 0 1px #262626;
}
.node.selected {
    box-shadow: none;
    border: 2px solid #d5822c;
}
.node h3 {
    flex: none;
    height: 31px;
    line-height: 30px;
    padding-right: 21px;
    text-align: center;
    background: #4f5052;
    border-left: 21px solid #2b5ca0;
    box-shadow: inset -21px 0 0 #bd4e52;
}
.ports {
    flex: 1;
    display: flex;
    justify-content: space-between;
    background: linear-gradient(90deg, #4f5052 21px, transparent 21px calc(100% - 21px), #4f5052 calc(100% - 21px));
    color: #b8b8b8;
}
.ports ul {
    display: flex;
    flex-direction: column;
    gap: 14px;
    min-width: 21px;
    padding-top: 5px;
}
.ports li {
    display: flex;
    align-items: center;
    gap: 7px;
    padding: 0 3px 0 2px;
    height: 20px;
}
.ports b {
    width: 17px;
    height: 17px;
    border: 3px solid #737373;
    border-radius: 50%;
    background: #c4c4c4;
}
.ports .open {
    background: none;
    border: 2px solid #707070;
}
.value {
    padding-top: 5px;
}
.n-source {
    left: 28px;
    top: 138px;
    width: 254px;
    height: 63px;
}
.n-reference {
    left: 383px;
    top: 117px;
    width: 267px;
    height: 112px;
}
.n-reference ul {
    padding-top: 10px;
}
.n-reference .right {
    padding-top: 26px;
}
.n-name {
    left: 739px;
    top: 133px;
    width: 213px;
    height: 61px;
}
.n-result {
    left: 1016px;
    top: 122px;
    width: 216px;
    height: 63px;
}
.status {
    display: flex;
    align-items: center;
    height: 32px;
    padding-left: 5px;
    border: 1px solid #3a3a3a;
}

/* Managers on the right */
.managers {
    display: grid;
    grid-template-rows: 553px 1fr;
    gap: 6px;
    padding-top: 4px;
    background: #2e2e2e;
    min-width: 0;
}
.manager {
    display: flex;
}
.pane {
    flex: 1;
    min-width: 0;
    display: flex;
    flex-direction: column;
    border-left: 1px solid #3c3c3c;
    border-top: 1px solid #3a3a3a;
    border-bottom: 1px solid #3c3c3c;
}
.pane .menubar {
    height: 31px;
    border-bottom: 1px solid #3c3c3c;
    padding: 0 4px 2px 8px;
}
.vtabs {
    display: flex;
    flex-direction: column;
    align-items: flex-start;
    width: 29px;
    padding-right: 2px;
    background: #262626;
}
.vtabs button {
    writing-mode: vertical-rl;
    width: 27px;
    padding: 7px 3px;
    color: #747474;
    text-align: left;
}
.vtabs .active {
    background: #2e2e2e;
    border: 1px solid #3a3a3a;
    border-left: 0;
    border-radius: 0 4px 4px 0;
    color: #c8c8c8;
}
.tree {
    flex: 1;
    margin: 1px 3px 2px 1px;
    border: 1px solid #363636;
    background: linear-gradient(#3a3a3a, #3a3a3a) 150px 0 / 2px 100% no-repeat, linear-gradient(#3a3a3a, #3a3a3a) 202px 0 / 2px 100% no-repeat;
}
.tree table {
    width: 100%;
    table-layout: fixed;
    border-collapse: collapse;
}
.tree td {
    height: 27px;
    padding: 0;
    color: #b5651d;
}
.tree tr:nth-child(odd) {
    background: #383838;
}
.tree .name {
    width: 152px;
}
.tree .flags {
    width: 52px;
}
.name div {
    display: flex;
    align-items: center;
}
.name svg {
    width: 18px;
    height: 20px;
    margin-right: 6px;
}
.name .toggle {
    width: 19px;
    height: 27px;
    margin: 0 1px 0 2px;
}
.name.l1 div { padding-left: 15px; }
.name.l2 div { padding-left: 30px; }
.name.l3 div { padding-left: 45px; }
.name.l4 div { padding-left: 60px; }
.tree .current {
    color: #f5b50a;
    font-weight: 500;
}
.flags div {
    display: flex;
    align-items: center;
    gap: 6px;
    padding-left: 4px;
}
.flags .layer {
    width: 16px;
    height: 16px;
    border-radius: 3px;
    background: linear-gradient(135deg, transparent 47%, #2e2e2e 47% 54%, transparent 54%), #858585;
}
.flags .dots {
    width: 7px;
    height: 18px;
    background: radial-gradient(circle, #858585 3px, transparent 4px) 0 0 / 7px 9px;
}
.flags svg {
    width: 14px;
    height: 12px;
    margin-left: -4px;
    fill: none;
    stroke: #4be87c;
    stroke-width: 2;
}
.tags svg {
    width: 22px;
    height: 24px;
    margin-left: 2px;
}
.attr {
    padding: 4px 5px 0 4px;
}
.attr-title {
    display: flex;
    align-items: center;
    gap: 6px;
    height: 30px;
}
.attr-title svg {
    width: 28px;
    height: 28px;
    color: #858585;
}
.segments {
    display: flex;
    margin-top: 3px;
}
.segments button {
    width: 82px;
    height: 23px;
    background: #474747;
    border-radius: 2px 0 0 2px;
}
.segments .active {
    background: #7592c4;
    color: #101418;
    border-radius: 0 2px 2px 0;
}
.attr h2 {
    margin: 10px 0 0 2px;
    color: #e4e4e4;
    font-weight: 600;
}
.row {
    display: flex;
    align-items: center;
    margin-top: 6px;
}
.row input[type="radio"] {
    appearance: none;
    width: 20px;
    height: 20px;
    margin: 0 10px 0 1px;
    border-radius: 50%;
    border: 3px solid #5c5c5c;
    background: radial-gradient(circle, #858585 5px, #262626 6px);
}
.row input[type="text"] {
    flex: 1;
    height: 24px;
    margin-left: 7px;
    padding: 0 6px;
    background: #272727;
    border: 1px solid #3a3a3a;
    border-radius: 5px;
}
```
